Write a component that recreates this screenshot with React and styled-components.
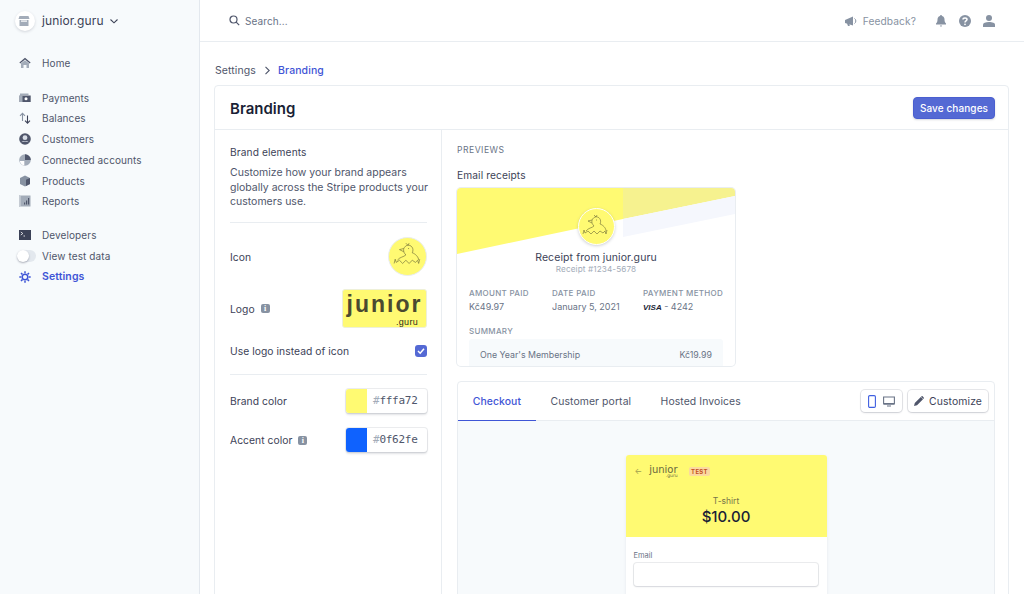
import React from "react";
import styled, { createGlobalStyle } from "styled-components";

const Global = createGlobalStyle`
  html, body { margin: 0; height: 100%; overflow: hidden; background: #fff; }
  body { font-family: Inter, "Liberation Sans", sans-serif; font-size: 10px; color: #4f566b; }
  * { box-sizing: border-box; }
`;

const Page = styled.div`
  display: flex;
  width: 1024px;
  height: 594px;
  overflow: hidden;
`;

const Sidebar = styled.aside`
  width: 200px;
  flex: none;
  background: #f7fafc;
  border-right: 1px solid #e3e8ee;
  padding: 10px 0 0 15px;
`;

const Account = styled.div`
  display: flex;
  align-items: center;
  gap: 7px;
  height: 21px;
  font-size: 12px;
  letter-spacing: 0.1px;
  color: #3c4257;
  margin-bottom: 22px;
  svg:last-child { margin-left: -2px; }
`;

const AccountBadge = styled.span`
  width: 20px;
  height: 20px;
  border-radius: 50%;
  background: #fff;
  box-shadow: 0 1px 3px rgba(60, 66, 87, 0.2);
  display: flex;
  align-items: center;
  justify-content: center;
`;

const NavGroup = styled.div`
  display: flex;
  flex-direction: column;
  margin-bottom: 13.4px;
`;

const NavItem = styled.div`
  display: flex;
  align-items: center;
  gap: 11px;
  height: 20.75px;
  padding-left: 4px;
  font-size: ${(p) => (p.$active ? 10.5 : 10)}px;
  letter-spacing: 0.1px;
  font-weight: ${(p) => (p.$active ? 600 : 400)};
  color: ${(p) => (p.$active ? "#3f55d6" : "#4f566b")};
  svg { width: 12px; height: 12px; flex: none; }
`;

const Toggle = styled.span`
  width: 19px;
  height: 12px;
  margin: 0 -5px 0 -2px;
  border-radius: 6px;
  background: #e3e8ee;
  position: relative;
  flex: none;
  &::after {
    content: "";
    position: absolute;
    left: 0;
    top: 0;
    width: 12px;
    height: 12px;
    border-radius: 50%;
    background: #fff;
    box-shadow: 0 1px 2px rgba(60, 66, 87, 0.4);
  }
`;

const Main = styled.main`
  flex: 1;
  min-width: 0;
`;

const TopBar = styled.header`
  height: 42px;
  display: flex;
  align-items: center;
  justify-content: space-between;
  border-bottom: 1px solid #e9edf1;
  padding: 0 29px;
`;

const Search = styled.div`
  display: flex;
  align-items: center;
  gap: 5px;
  color: #697386;
  font-size: 10px;
  letter-spacing: 0.1px;
`;

const TopActions = styled.div`
  display: flex;
  align-items: center;
  color: #8792a2;
  font-size: 10.2px;
  letter-spacing: 0.1px;
`;

const Feedback = styled.span`
  display: flex;
  align-items: center;
  gap: 6px;
  margin-right: 18px;
`;

const IconGap = styled.span`
  display: flex;
  margin-left: ${(p) => p.$left || 0}px;
`;

const Content = styled.div`
  padding: 20px 14px 0;
`;

const Crumbs = styled.nav`
  display: flex;
  align-items: center;
  gap: 7.5px;
  height: 16px;
  padding-left: 1px;
  margin-bottom: 7px;
  font-size: 10.5px;
  letter-spacing: 0.1px;
  color: #4f566b;
  b { color: #3f55d6; font-weight: 500; }
`;

const Card = styled.section`
  width: 795px;
  border: 1px solid #e9edf1;
  border-radius: 4px;
  height: 700px;
`;

const CardHead = styled.div`
  height: 44px;
  display: flex;
  align-items: center;
  justify-content: space-between;
  padding: 0 13px 0 15px;
  border-bottom: 1px solid #e9edf1;
  h1 { margin: 1px 0 0; font-size: 15px; font-weight: 600; color: #1a1f36; }
`;

const SaveButton = styled.button`
  height: 22px;
  width: 82px;
  padding: 0;
  border: 1px solid #4a5fd0;
  border-radius: 4px;
  background: #5469d4;
  color: #fff;
  font: 500 10px Inter, sans-serif;
  letter-spacing: 0.1px;
  box-shadow: 0 1px 2px rgba(60, 66, 87, 0.2);
`;

const CardBody = styled.div`
  display: flex;
`;

const LeftCol = styled.div`
  width: 227px;
  flex: none;
  height: 660px;
  border-right: 1px solid #e9edf1;
  padding: 15px 14px 0 15px;
`;

const BrandTitle = styled.div`
  font-size: 10.2px;
  color: #3c4257;
  letter-spacing: 0.1px;
  line-height: 14px;
`;

const BrandText = styled.p`
  margin: 7px -4px 12px 0;
  font-size: 10.5px;
  line-height: 14.5px;
  color: #4f566b;
`;

const Divider = styled.div`
  height: 1px;
  background: #e9edf1;
  margin-top: ${(p) => p.$top || 0}px;
`;

const Row = styled.div`
  display: flex;
  align-items: center;
  justify-content: space-between;
  height: ${(p) => p.$h}px;
  margin-top: ${(p) => p.$top || 0}px;
`;

const RowLabel = styled.span`
  display: flex;
  align-items: center;
  gap: 6px;
  padding-top: 1px;
  font-size: 10.3px;
  color: #3c4257;
  letter-spacing: 0.05px;
`;

const InfoBadge = styled.span`
  width: 9px;
  height: 9px;
  border-radius: 2px;
  background: #8792a2;
  color: #fff;
  font: 700 8px/9px "Liberation Serif", serif;
  text-align: center;
`;

const IconCircle = styled.span`
  width: 39px;
  height: 39px;
  border-radius: 50%;
  background: #fffa72;
  border: 1px solid #e9edf1;
  display: flex;
  align-items: center;
  justify-content: center;
`;

const LogoBox = styled.span`
  width: 85px;
  height: 39px;
  background: #fffa72;
  border: 1px solid #eef0d8;
  border-radius: 3px;
  display: flex;
  flex-direction: column;
  align-items: center;
  color: #4a4930;
`;

const LogoWord = styled.span`
  font: 700 23px/26px "Liberation Sans", sans-serif;
  letter-spacing: 2px;
  margin-top: 1px;
`;

const LogoSub = styled.span`
  font: 400 9px/10px "Liberation Sans", sans-serif;
  letter-spacing: 0.3px;
  align-self: flex-end;
  margin-right: 8px;
  color: #2b2b20;
`;

const Check = styled.span`
  width: 12px;
  height: 12px;
  border-radius: 3px;
  background: #5469d4;
  display: flex;
  align-items: center;
  justify-content: center;
`;

const Swatch = styled.span`
  width: 81px;
  height: 24px;
  display: flex;
  border-radius: 3px;
  overflow: hidden;
  background: #fff;
  box-shadow: 0 0 0 1px rgba(60, 66, 87, 0.1), 0 2px 2px rgba(60, 66, 87, 0.15);
`;

const SwatchColor = styled.span`
  width: 21px;
  background: ${(p) => p.$color};
`;

const SwatchCode = styled.span`
  flex: 1;
  padding-left: 6px;
  font: 11px/23px "DejaVu Sans Mono", monospace;
  letter-spacing: -0.25px;
  color: #4f566b;
  i { font-style: normal; color: #a3acb9; }
`;

const RightCol = styled.div`
  flex: 1;
  padding: 14px 14px 0 15px;
`;

const Eyebrow = styled.div`
  font-size: 8.6px;
  line-height: 12px;
  letter-spacing: 0.5px;
  color: #697386;
  margin-bottom: 12px;
`;

const PreviewTitle = styled.div`
  font-size: 10.2px;
  line-height: 14px;
  letter-spacing: 0.1px;
  color: #3c4257;
  margin-bottom: 6px;
`;

const Receipt = styled.div`
  position: relative;
  width: 278px;
  height: 178px;
  border-radius: 4px;
  overflow: hidden;
  box-shadow: 0 0 0 1px #e9edf1;
  padding: 20px 12px 0;
`;

const ReceiptBg = styled.svg`
  position: absolute;
  left: 0;
  top: 0;
`;

const ReceiptAvatar = styled.div`
  position: relative;
  width: 37px;
  height: 37px;
  margin: 0 auto;
  border-radius: 50%;
  background: #fffa72;
  border: 1px solid #fff;
  box-shadow: 0 1px 3px rgba(60, 66, 87, 0.25);
  display: flex;
  align-items: center;
  justify-content: center;
`;

const ReceiptTitle = styled.div`
  position: relative;
  margin-top: 6px;
  text-align: center;
  font-size: 10.5px;
  line-height: 14px;
  letter-spacing: 0.1px;
  color: #3c4257;
`;

const ReceiptSub = styled.div`
  text-align: center;
  font-size: 8.2px;
  line-height: 9px;
  letter-spacing: 0.1px;
  color: #a3acb9;
  margin-bottom: 13.5px;
`;

const ReceiptGrid = styled.div`
  display: grid;
  grid-template-columns: 83px 91px 1fr;
`;

const MetaLabel = styled.div`
  font-size: 8px;
  font-weight: 500;
  line-height: 10px;
  letter-spacing: 0.3px;
  color: #8792a2;
  white-space: nowrap;
  margin-top: ${(p) => p.$top || 0}px;
  margin-bottom: ${(p) => p.$mb || 0}px;
`;

const MetaValue = styled.div`
  font-size: 9px;
  line-height: 12px;
  margin-top: 3.5px;
  color: #697386;
  em { font: italic 800 8px "Liberation Sans", sans-serif; color: #1a1f36; }
`;

const Summary = styled.div`
  height: 40px;
  border-radius: 3px 3px 0 0;
  background: #f7fafc;
  padding: 0 11px;
  display: flex;
  justify-content: space-between;
  align-items: flex-start;
  line-height: 31px;
  font-size: 8.8px;
  color: #697386;
`;

const Panel = styled.div`
  width: 538px;
  margin-top: 15px;
  border: 1px solid #e9edf1;
  border-radius: 4px;
  height: 400px;
`;

const PanelHead = styled.div`
  height: 39px;
  display: flex;
  align-items: center;
  justify-content: space-between;
  padding-right: 6px;
  border-bottom: 1px solid #e9edf1;
`;

const Tabs = styled.div`
  display: flex;
  height: 100%;
`;

const Tab = styled.div`
  display: flex;
  align-items: center;
  padding: 0 14.7px;
  font-size: 10.4px;
  letter-spacing: 0.1px;
  font-weight: ${(p) => (p.$active ? 500 : 400)};
  color: ${(p) => (p.$active ? "#3f55d6" : "#4f566b")};
  margin-bottom: -1px;
  border-bottom: ${(p) => (p.$active ? "1px solid #3f55d6" : "1px solid transparent")};
`;

const PanelTools = styled.div`
  display: flex;
  gap: 6px;
`;

const ToolButton = styled.div`
  height: 22px;
  display: flex;
  align-items: center;
  gap: ${(p) => p.$gap}px;
  padding: 0 ${(p) => p.$pad}px;
  border-radius: 4px;
  background: #fff;
  font-size: 10.4px;
  letter-spacing: 0.1px;
  color: #3c4257;
  box-shadow: 0 0 0 1px rgba(60, 66, 87, 0.12), 0 1px 2px rgba(60, 66, 87, 0.15);
`;

const PanelBody = styled.div`
  background: #f7fafc;
  height: 360px;
  display: flex;
  justify-content: center;
  padding-top: 34px;
`;

const Checkout = styled.div`
  width: 201px;
  height: 300px;
  background: #fff;
  border-radius: 3px;
  overflow: hidden;
  box-shadow: 0 1px 3px rgba(60, 66, 87, 0.1);
`;

const CheckoutHead = styled.div`
  height: 82px;
  background: #fffa72;
  padding: 10px 9px 0;
`;

const CheckoutTop = styled.div`
  display: flex;
  align-items: center;
  gap: 5px;
  height: 12px;
  color: #a09e4e;
  font-size: 8px;
`;

const CheckoutLogo = styled.span`
  display: flex;
  flex-direction: column;
  font: 400 10px/9px "DejaVu Sans", sans-serif;
  color: #6a6940;
  margin: 0 6px 0 2px;
  small { font-size: 4.5px; line-height: 4px; align-self: flex-end; }
`;

const TestTag = styled.span`
  font-size: 6px;
  line-height: 9px;
  padding: 0 2.5px;
  font-weight: 700;
  letter-spacing: 0.3px;
  border-radius: 2px;
  color: #c4501f;
  background: #fbd9a0;
`;

const Product = styled.div`
  text-align: center;
  margin-top: 19px;
  font-size: 8.5px;
  line-height: 11px;
  color: #77754a;
`;

const Price = styled.div`
  text-align: center;
  margin-top: 1px;
  font-size: 15px;
  line-height: 18px;
  font-weight: 500;
  color: #1a1f36;
`;

const CheckoutBody = styled.div`
  padding: 14px 8px 0;
`;

const FieldLabel = styled.div`
  font-size: 7.5px;
  line-height: 10px;
  color: #697386;
  margin: 0 0 2px 0;
`;

const Field = styled.div`
  height: 23px;
  width: 184px;
  border-radius: 3px;
  background: #fff;
  box-shadow: 0 0 0 1px rgba(60, 66, 87, 0.1), 0 1px 2px rgba(60, 66, 87, 0.12);
`;

const Duck = ({ size = 32, color = "#6b6a35" }) => (
  <svg width={size} height={size} viewBox="0 0 30 30" fill="none" stroke={color} strokeWidth="0.6">
    <path d="M2 22 l1-4 1 3 3-2 3 3 3-3 3 3 3-3 3 2 2-2 1 3 1-4" />
    <path d="M5 19 C7 16 11 16 13 14 C10 11 10 7 14 5 C18 4 21 8 19 12 C22 13 25 16 25 19" />
    <path d="M11 8 l-4 1 4 2 M15 8 h1" />
    <path d="M13 3 l2 2 1-2" />
  </svg>
);

const Chevron = () => (
  <svg width="10" height="10" viewBox="0 0 10 10" fill="none" stroke="#3c4257" strokeWidth="1.1">
    <path d="M1.500 3.500 L5 6.800 L8.500 3.500" />
  </svg>
);

const icons = {
  home: <svg viewBox="0 0 12 12"><path fill="#4f566b" d="M6 .8 11.600 5.400l-.8 1L6 2.600 1.200 6.400l-.8-1z" /><path fill="#a3acb9" d="M2 6.300 6 3.200l4 3.100V11H7.500V8h-3v3H2z" /></svg>,
  payments: <svg viewBox="0 0 12 12"><path fill="#a3acb9" d="M1 1.500h8.500v1.500H1z" /><path fill="#4f566b" d="M.5 3.500h11.200v6.500H.5z" /><circle cx="7" cy="6.800" r="1.500" fill="#fff" /><path fill="#a3acb9" d="M.5 3.500h3v6.500h-3z" /></svg>,
  balances: <svg viewBox="0 0 12 12" fill="none" strokeWidth="1.1"><path stroke="#8792a2" d="M3.500 9V1.500M1 3.800l2.500-2.500L6 3.800" /><path stroke="#3c4257" d="M8.500 3.500V11M6 8.700l2.500 2.500L11 8.700" /></svg>,
  customers: <svg viewBox="0 0 12 12"><circle cx="6" cy="6" r="5.800" fill="#4f566b" /><circle cx="6" cy="4.700" r="2.400" fill="#d8dde6" /><path fill="#d8dde6" d="M2.300 9.200C3.500 7.600 8.500 7.600 9.700 9.200L6 8.500z" /></svg>,
  connected: <svg viewBox="0 0 12 12"><circle cx="6" cy="6" r="5.800" fill="#a3acb9" /><path fill="#4f566b" d="M6 .2A5.800 5.800 0 0 1 11.800 6H6z" /><path fill="#fff" d="M.8 7h4.500v4.500A5.800 5.800 0 0 1 .8 7z" /></svg>,
  products: <svg viewBox="0 0 12 12"><path fill="#8792a2" d="M1 3 6 .6 11 3v6l-5 2.600L1 9z" /><path fill="#4f566b" d="M7 4.800 11 3v6l-4 2z" /></svg>,
  reports: <svg viewBox="0 0 12 12"><path fill="#a3acb9" d="M1.500.5H11.500V11.500H1.500z" /><path fill="#4f566b" d="M5 7.500h1.200v2H5zM7 5.500h1.200v4H7zM9 3h1.200v6.500H9z" /><path stroke="#697386" strokeDasharray="1 1" fill="none" d="M.8.500V11.500" /></svg>,
  developers: <svg viewBox="0 0 12 12"><path fill="#3c4257" d="M0 1h12v10H0z" /><path stroke="#fff" strokeWidth=".8" fill="none" d="M1.800 3 3.800 4.500 1.800 6M4.500 7H6" /></svg>,
  settings: <svg viewBox="0 0 12 12" fill="none" stroke="#3f55d6"><circle cx="6" cy="6" r="2.800" strokeWidth="1.500" /><path strokeWidth="1.500" d="M6 .3v2M6 9.700v2M.3 6h2M9.700 6h2M2 2l1.400 1.400M8.600 8.600 10 10M10 2 8.600 3.400M3.400 8.600 2 10" /></svg>,
};

const groups = [
  [["home", "Home"]],
  [["payments", "Payments"], ["balances", "Balances"], ["customers", "Customers"], ["connected", "Connected accounts"], ["products", "Products"], ["reports", "Reports"]],
];

export default function App() {
  return (
    <Page>
      <Global />
      <Sidebar>
        <Account>
          <AccountBadge>
            <svg width="12" height="12" viewBox="0 0 12 12"><path fill="#a3acb9" d="M1.500 1h9l1 3h-11z" /><path fill="#a3acb9" d="M1.500 5h9v6h-9z" /><path fill="#fff" d="M3 5.500h6v1.200H3z" /></svg>
          </AccountBadge>
          junior.guru
          <Chevron />
        </Account>
        {groups.map((group, i) => (
          <NavGroup key={i}>
            {group.map(([icon, label]) => (
              <NavItem key={label}>{icons[icon]}{label}</NavItem>
            ))}
          </NavGroup>
        ))}
        <NavGroup>
          <NavItem>{icons.developers}Developers</NavItem>
          <NavItem><Toggle />View test data</NavItem>
          <NavItem $active>{icons.settings}Settings</NavItem>
        </NavGroup>
      </Sidebar>
      <Main>
        <TopBar>
          <Search>
            <svg width="11" height="11" viewBox="0 0 11 11" fill="none" stroke="#4f566b" strokeWidth="1.2"><circle cx="4.500" cy="4.500" r="3.500" /><path d="m7.200 7.200 3 3" /></svg>
            Search...
          </Search>
          <TopActions>
            <Feedback>
              <svg width="12" height="12" viewBox="0 0 12 12"><path fill="#8792a2" d="M0 5 8 1.500v9L0 8zM2 8.500h2l.8 2.500H3z" /><path fill="none" stroke="#8792a2" d="M9.500 3.500a3 3 0 0 1 0 5" /></svg>
              Feedback?
            </Feedback>
            <IconGap $left={1}>
              <svg width="12" height="12" viewBox="0 0 12 12"><path fill="#8792a2" d="M6 0a1 1 0 0 1 1 1c2 .5 2.500 2 2.500 3.500 0 2 .5 3 1.500 4v1H1v-1c1-1 1.500-2 1.500-4C2.500 3 3 1.500 5 1a1 1 0 0 1 1-1zM4.800 10.500h2.400L6 12z" /></svg>
            </IconGap>
            <IconGap $left={12}>
              <svg width="12" height="12" viewBox="0 0 12 12"><circle cx="6" cy="6" r="6" fill="#8792a2" /><path fill="none" stroke="#fff" strokeWidth="1.5" d="M4 4.500C4 2.500 8 2.500 8 4.500 8 6 6 5.800 6 7.500" /><circle cx="6" cy="9.300" r=".9" fill="#fff" /></svg>
            </IconGap>
            <IconGap $left={12}>
              <svg width="12" height="12" viewBox="0 0 12 12"><circle cx="6" cy="3" r="3" fill="#8792a2" /><path fill="#8792a2" d="M0 12V9.500C0 8 2.500 7 6 7s6 1 6 2.500V12z" /></svg>
            </IconGap>
          </TopActions>
        </TopBar>
        <Content>
          <Crumbs>
            Settings
            <svg width="7" height="9" viewBox="0 0 7 9" fill="none" stroke="#4f566b" strokeWidth="1.1"><path d="M1.500.8 5.200 4.500 1.500 8.200" /></svg>
            <b>Branding</b>
          </Crumbs>
          <Card>
            <CardHead>
              <h1>Branding</h1>
              <SaveButton>Save changes</SaveButton>
            </CardHead>
            <CardBody>
              <LeftCol>
                <BrandTitle>Brand elements</BrandTitle>
                <BrandText>Customize how your brand appears globally across the Stripe products your customers use.</BrandText>
                <Divider />
                <Row $h={39} $top={14}>
                  <RowLabel>Icon</RowLabel>
                  <IconCircle><Duck /></IconCircle>
                </Row>
                <Row $h={39} $top={13}>
                  <RowLabel>Logo <InfoBadge>i</InfoBadge></RowLabel>
                  <LogoBox>
                    <LogoWord>junior</LogoWord>
                    <LogoSub>.guru</LogoSub>
                  </LogoBox>
                </Row>
                <Row $h={14} $top={16}>
                  <RowLabel>Use logo instead of icon</RowLabel>
                  <Check>
                    <svg width="8" height="8" viewBox="0 0 8 8" fill="none" stroke="#fff" strokeWidth="1.5"><path d="M1 4 3.200 6.200 7 1.800" /></svg>
                  </Check>
                </Row>
                <Divider $top={16} />
                <Row $h={24} $top={14}>
                  <RowLabel>Brand color</RowLabel>
                  <Swatch>
                    <SwatchColor $color="#fffa72" />
                    <SwatchCode><i>#</i>fffa72</SwatchCode>
                  </Swatch>
                </Row>
                <Row $h={24} $top={15}>
                  <RowLabel>Accent color <InfoBadge>i</InfoBadge></RowLabel>
                  <Swatch>
                    <SwatchColor $color="#0f62fe" />
                    <SwatchCode><i>#</i>0f62fe</SwatchCode>
                  </Swatch>
                </Row>
              </LeftCol>
              <RightCol>
                <Eyebrow>PREVIEWS</Eyebrow>
                <PreviewTitle>Email receipts</PreviewTitle>
                <Receipt>
                  <ReceiptBg width="278" height="70" viewBox="0 0 278 70">
                    <polygon fill="#fffa72" points="0,0 166,0 166,31 0,66" />
                    <polygon fill="#f6f28f" points="166,0 278,0 278,8 166,31" />
                    <polygon fill="#f5f7fd" points="166,31 278,8 278,26 166,49" />
                  </ReceiptBg>
                  <ReceiptAvatar><Duck size={30} /></ReceiptAvatar>
                  <ReceiptTitle>Receipt from junior.guru</ReceiptTitle>
                  <ReceiptSub>Receipt #1234-5678</ReceiptSub>
                  <ReceiptGrid>
                    <div><MetaLabel>AMOUNT PAID</MetaLabel><MetaValue>Kč49.97</MetaValue></div>
                    <div><MetaLabel>DATE PAID</MetaLabel><MetaValue>January 5, 2021</MetaValue></div>
                    <div><MetaLabel>PAYMENT METHOD</MetaLabel><MetaValue><em>VISA</em> - 4242</MetaValue></div>
                  </ReceiptGrid>
                  <MetaLabel $top={13} $mb={3}>SUMMARY</MetaLabel>
                  <Summary><span>One Year's Membership</span><span>Kč19.99</span></Summary>
                </Receipt>
                <Panel>
                  <PanelHead>
                    <Tabs>
                      <Tab $active>Checkout</Tab>
                      <Tab>Customer portal</Tab>
                      <Tab>Hosted Invoices</Tab>
                    </Tabs>
                    <PanelTools>
                      <ToolButton $pad={7} $gap={7}>
                        <svg width="8" height="13" viewBox="0 0 8 13" fill="none" stroke="#3f5fe0" strokeWidth="1.1"><rect x=".6" y=".6" width="6.800" height="11.800" rx="1.200" /></svg>
                        <svg width="12" height="11" viewBox="0 0 12 11"><path fill="none" stroke="#697386" strokeWidth="1.1" d="M.6 1h10.800v7H.6z" /><path fill="#697386" d="M1 7h10v1.500H1zM4 9.500h4v1H4z" /></svg>
                      </ToolButton>
                      <ToolButton $pad={6} $gap={5}>
                        <svg width="10" height="10" viewBox="0 0 10 10"><path fill="#4f566b" d="M0 10 .8 7 6.800 1l2.200 2.200-6 6zM7.500.3a.8.8 0 0 1 1.100 0l1.100 1.100a.8.8 0 0 1 0 1.100l-.4.400L7.100.7z" /></svg>
                        Customize
                      </ToolButton>
                    </PanelTools>
                  </PanelHead>
                  <PanelBody>
                    <Checkout>
                      <CheckoutHead>
                        <CheckoutTop>
                          <span>←</span>
                          <CheckoutLogo>junior<small>.guru</small></CheckoutLogo>
                          <TestTag>TEST</TestTag>
                        </CheckoutTop>
                        <Product>T-shirt</Product>
                        <Price>$10.00</Price>
                      </CheckoutHead>
                      <CheckoutBody>
                        <FieldLabel>Email</FieldLabel>
                        <Field />
                      </CheckoutBody>
                    </Checkout>
                  </PanelBody>
                </Panel>
              </RightCol>
            </CardBody>
          </Card>
        </Content>
      </Main>
    </Page>
  );
}
